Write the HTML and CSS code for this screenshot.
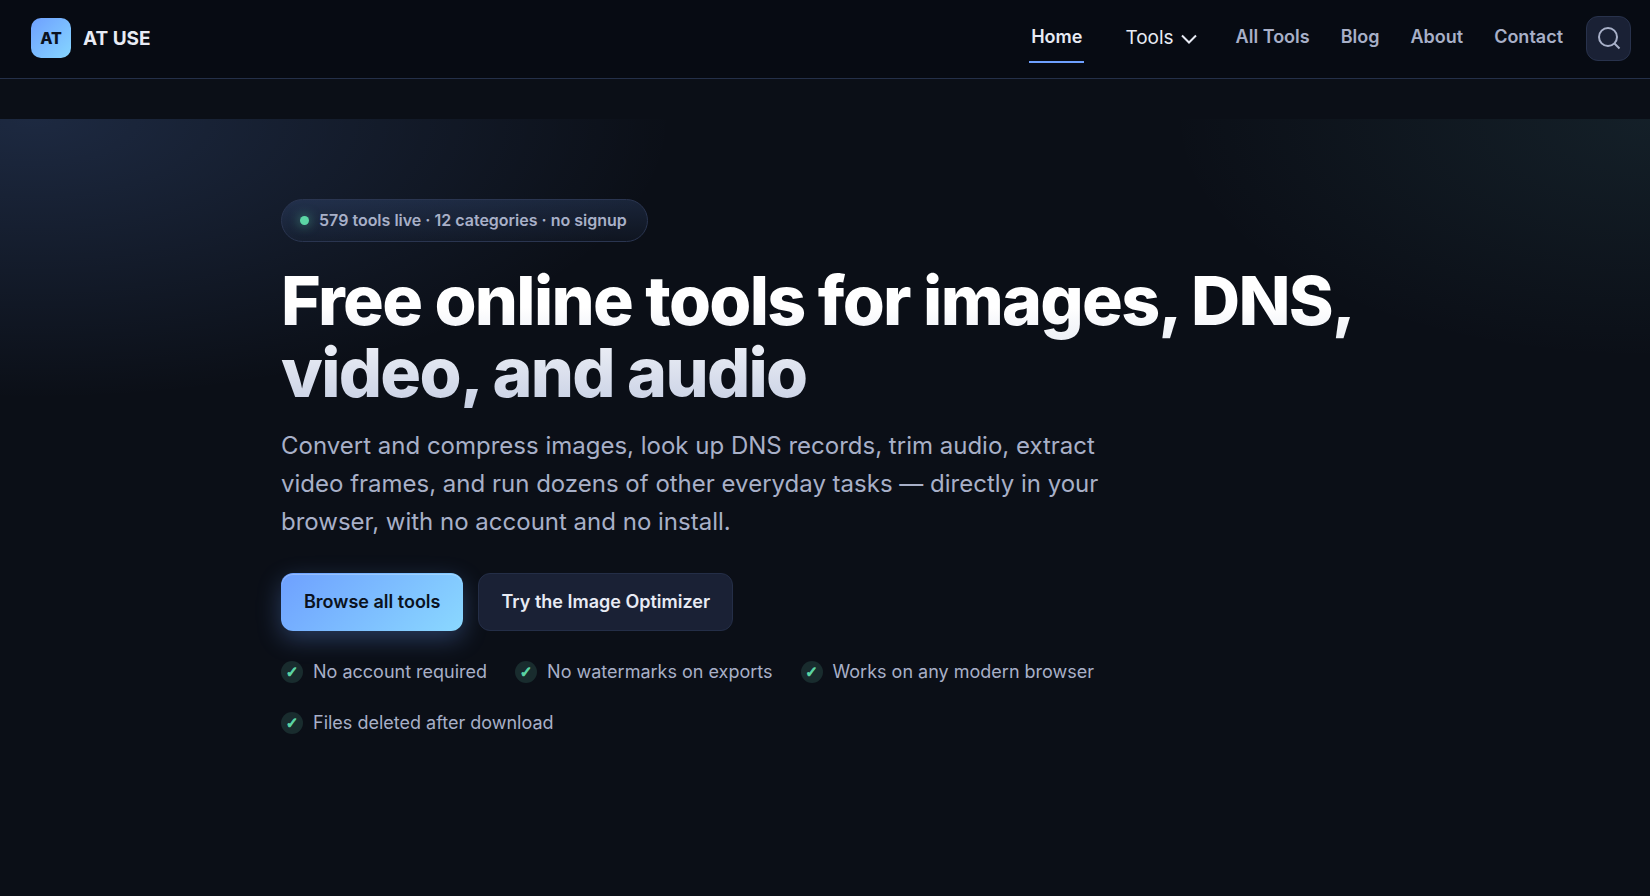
FILE: index.html
```html
<!DOCTYPE html>
<html lang="en">
<head>
    <meta charset="UTF-8">
    <meta name="viewport" content="width=device-width, initial-scale=1.0">
    <title>AT USE - Free online tools</title>
    <link rel="stylesheet" href="styles.css">
</head>
<body>
    <!-- Header -->
    <header class="site-header">
        <a href="#home" class="brand">
            <span class="brand-mark">AT</span>
            <span class="brand-name">AT USE</span>
        </a>
        <div class="header-right">
            <nav class="nav">
                <a href="#home" class="nav-link active">Home</a>
                <button type="button" class="nav-toggle">
                    Tools
                    <svg class="chevron" viewBox="0 0 16 10" fill="none" stroke="currentColor" stroke-width="2" aria-hidden="true">
                        <path d="M1 1.5l7 7 7-7"/>
                    </svg>
                </button>
                <a href="#tools" class="nav-link">All Tools</a>
                <a href="#blog" class="nav-link">Blog</a>
                <a href="#about" class="nav-link">About</a>
                <a href="#contact" class="nav-link">Contact</a>
            </nav>
            <button type="button" class="search-btn" aria-label="Search">
                <svg viewBox="0 0 24 24" fill="none" stroke="currentColor" stroke-width="2" aria-hidden="true">
                    <circle cx="11" cy="11" r="9"/>
                    <path d="M17.5 17.5L22.5 22.5"/>
                </svg>
            </button>
        </div>
    </header>

    <!-- Hero -->
    <main>
        <section class="hero">
            <div class="container">
                <p class="badge"><span class="badge-dot"></span>579 tools live · 12 categories · no signup</p>
                <h1>Free online tools for images, DNS, video, and audio</h1>
                <p class="lead">Convert and compress images, look up DNS records, trim audio, extract video frames, and run dozens of other everyday tasks — directly in your browser, with no account and no install.</p>
                <div class="actions">
                    <a href="#tools" class="btn btn-primary">Browse all tools</a>
                    <a href="#optimizer" class="btn btn-secondary">Try the Image Optimizer</a>
                </div>
                <ul class="trust-list">
                    <li>No account required</li>
                    <li>No watermarks on exports</li>
                    <li>Works on any modern browser</li>
                    <li>Files deleted after download</li>
                </ul>
            </div>
        </section>
    </main>
</body>
</html>
```
FILE: styles.css
```css
* {
    margin: 0;
    padding: 0;
    box-sizing: border-box;
}

body {
    font-family: Inter, sans-serif;
    font-size: 18px;
    background-color: #0b0f17;
    color: #e8ebf4;
    min-height: 100vh;
    display: flex;
    flex-direction: column;
}

a {
    text-decoration: none;
    color: inherit;
}

button {
    font-family: inherit;
    cursor: pointer;
}

/* Header */
.site-header {
    display: flex;
    justify-content: space-between;
    align-items: center;
    padding: 13px 19px 15px 31px;
    background-color: #070b13;
    border-bottom: 1px solid #243049;
}

.brand {
    display: flex;
    align-items: center;
    gap: 12px;
}

.brand-mark {
    width: 40px;
    height: 40px;
    display: flex;
    align-items: center;
    justify-content: center;
    border-radius: 10px;
    background: linear-gradient(135deg, #6ea0ff, #86d6ff);
    color: #0b1220;
    font-size: 16px;
    font-weight: 800;
}

.brand-name {
    font-size: 19px;
    font-weight: 700;
}

.header-right {
    display: flex;
    align-items: center;
    gap: 21px;
}

.nav {
    display: flex;
    align-items: center;
    gap: 27px;
}

.nav-link {
    padding: 13px 2px;
    border-bottom: 2px solid transparent;
    color: #a8b0c8;
    font-size: 18px;
    line-height: 22px;
    font-weight: 600;
}

.nav-link.active {
    color: #e8ebf4;
    border-bottom-color: #6ea0ff;
}

.nav-toggle {
    display: flex;
    align-items: center;
    gap: 7px;
    padding: 0 10px 2px 14px;
    background: none;
    border: none;
    color: #e8ebf4;
    font-size: 19px;
}

.chevron {
    width: 16px;
    height: 10px;
    margin-top: 4px;
}

.search-btn {
    width: 45px;
    height: 45px;
    display: flex;
    align-items: center;
    justify-content: center;
    background-color: #1a2135;
    border: 1px solid #28324c;
    border-radius: 12px;
    color: #a8b0c8;
}

.search-btn svg {
    width: 24px;
    height: 24px;
}

/* Hero */
main {
    flex: 1;
    display: flex;
    padding-top: 40px;
}

.hero {
    flex: 1;
    padding: 80px 24px 156px;
    background:
        radial-gradient(640px 280px at 2% 0, rgba(110, 160, 255, 0.18), transparent),
        radial-gradient(480px 240px at 100% 0, rgba(110, 200, 215, 0.09), transparent);
}

.container {
    max-width: 1088px;
    margin: 0 auto;
}

.badge {
    display: flex;
    align-items: center;
    gap: 10px;
    width: fit-content;
    padding: 10px 20px 10px 18px;
    border: 1px solid #2a3550;
    border-radius: 22px;
    background: linear-gradient(180deg, rgba(110, 160, 255, 0.15), rgba(110, 160, 255, 0.04));
    color: #a8b0c8;
    font-size: 16px;
    line-height: 21px;
    font-weight: 600;
}

.badge-dot {
    width: 9px;
    height: 9px;
    border-radius: 50%;
    background-color: #5cd6a5;
    box-shadow: 0 0 12px rgba(92, 214, 165, 0.7);
}

h1 {
    margin-top: 22px;
    font-size: 68px;
    line-height: 72px;
    font-weight: 800;
    letter-spacing: -0.025em;
    background: linear-gradient(180deg, #ffffff 30%, #c8d0e4);
    -webkit-background-clip: text;
    background-clip: text;
    color: transparent;
}

.lead {
    max-width: 820px;
    margin-top: 19px;
    color: #a8b0c8;
    font-size: 24px;
    line-height: 38px;
}

.actions {
    display: flex;
    flex-wrap: wrap;
    gap: 15px;
    margin-top: 32px;
}

.btn {
    padding: 17px 22px;
    border: 1px solid transparent;
    border-radius: 12px;
    font-size: 18px;
    line-height: 22px;
    font-weight: 600;
}

.btn-primary {
    background: linear-gradient(135deg, #6ea0ff, #8ad8ff) border-box;
    box-shadow: 0 8px 24px rgba(110, 160, 255, 0.3), inset 0 1px 0 rgba(255, 255, 255, 0.25);
    color: #0b1220;
}

.btn-secondary {
    background-color: #1a2135;
    border-color: #242e47;
}

.trust-list {
    display: flex;
    flex-wrap: wrap;
    gap: 22px 28px;
    margin-top: 26px;
    list-style: none;
    color: #a8b0c8;
}

.trust-list li {
    display: flex;
    align-items: center;
    gap: 10px;
    line-height: 29px;
}

.trust-list li::before {
    content: "✓";
    width: 22px;
    height: 22px;
    border-radius: 50%;
    background-color: #192c2e;
    color: #5cd6a5;
    font-family: "DejaVu Sans", sans-serif;
    font-size: 15px;
    font-weight: 700;
    line-height: 22px;
    text-align: center;
    -webkit-text-stroke: 1px #5cd6a5;
}
```
